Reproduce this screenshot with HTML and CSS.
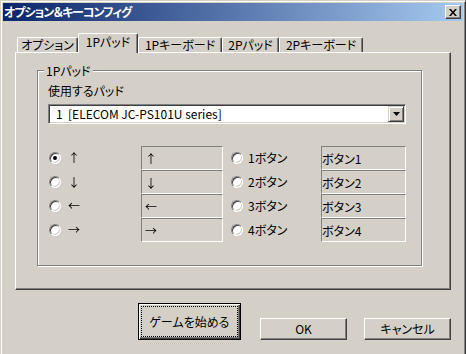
FILE: index.html
```html
<!DOCTYPE html>
<html lang="ja">
<head>
  <meta charset="UTF-8">
  <title>オプション＆キーコンフィグ</title>
  <link rel="stylesheet" href="styles.css">
</head>
<body>
  <div class="window">
    <div class="titlebar">
      <span class="title">オプション＆キーコンフィグ</span>
      <span class="close-btn">
        <svg width="8" height="7" viewBox="0 0 8 7"><path d="M0 0h2l2 2.4L6 0h2L5 3.5 8 7H6L4 4.6 2 7H0l3-3.5z" fill="#000"/></svg>
      </span>
    </div>

    <div class="main">
      <div class="tabs">
        <div class="tab tab-option">オプション</div>
        <div class="tab tab-pad1 active">1Pパッド</div>
        <div class="tab tab-key1">1Pキーボード</div>
        <div class="tab tab-pad2">2Pパッド</div>
        <div class="tab tab-key2">2Pキーボード</div>
      </div>

      <div class="panel">
        <div class="group">
          <div class="legend">1Pパッド</div>
          <div class="field-label">使用するパッド</div>
          <div class="combo">
            <span class="combo-text">1&nbsp;&nbsp;[ELECOM JC-PS101U series]</span>
            <span class="drop-btn">
              <svg width="7" height="4" viewBox="0 0 7 4"><path d="M0 0h7L3.5 4z" fill="#000"/></svg>
            </span>
          </div>

          <div class="rows">
            <div class="row">
              <span class="radio on"></span><span class="opt arrow">&#x2191;&#xFE0E;</span><span class="box box-dir arrow">&#x2191;&#xFE0E;</span>
              <span class="radio radio-btn"></span><span class="opt opt-btn">1ボタン</span><span class="box box-btn">ボタン1</span>
            </div>
            <div class="row">
              <span class="radio"></span><span class="opt arrow">&#x2193;&#xFE0E;</span><span class="box box-dir arrow">&#x2193;&#xFE0E;</span>
              <span class="radio radio-btn"></span><span class="opt opt-btn">2ボタン</span><span class="box box-btn">ボタン2</span>
            </div>
            <div class="row">
              <span class="radio"></span><span class="opt arrow">&#x2190;&#xFE0E;</span><span class="box box-dir arrow">&#x2190;&#xFE0E;</span>
              <span class="radio radio-btn"></span><span class="opt opt-btn">3ボタン</span><span class="box box-btn">ボタン3</span>
            </div>
            <div class="row">
              <span class="radio"></span><span class="opt arrow">&#x2192;&#xFE0E;</span><span class="box box-dir arrow">&#x2192;&#xFE0E;</span>
              <span class="radio radio-btn"></span><span class="opt opt-btn">4ボタン</span><span class="box box-btn">ボタン4</span>
            </div>
          </div>
        </div>
      </div>

      <div class="footer">
        <div class="btn btn-default"><span class="focus">ゲームを始める</span></div>
        <div class="btn btn-ok">OK</div>
        <div class="btn btn-cancel">キャンセル</div>
      </div>
    </div>
  </div>
</body>
</html>
```

FILE: styles.css
```css
body {
  margin: 0;
  overflow: hidden;
  background: #d4d0c8;
  font-family: "Noto Sans CJK JP", sans-serif;
  font-size: 12px;
  font-feature-settings: "palt";
  color: #000;
}
.window {
  box-sizing: border-box;
  width: 466px;
  height: 358px;
  padding: 2px;
  background: #d4d0c8;
  border: 1px solid;
  border-color: #d4d0c8 #404040 #404040 #d4d0c8;
  box-shadow: inset 1px 1px #fff, inset -1px -1px #808080;
}
.titlebar {
  height: 18px;
  display: flex;
  align-items: center;
  justify-content: space-between;
  padding: 0 2px 0 1px;
  background: linear-gradient(to right, #0a246a, #a6caf0);
}
.title {
  color: #fff;
  font-weight: bold;
  line-height: 14px;
  letter-spacing: -1px;
}
.close-btn {
  box-sizing: border-box;
  width: 16px;
  height: 14px;
  display: flex;
  align-items: center;
  justify-content: center;
  background: #d4d0c8;
  border: 1px solid;
  border-color: #fff #404040 #404040 #fff;
  box-shadow: inset -1px -1px #808080;
}
.main {
  padding: 12px 12px 0 12px;
}
.tabs {
  height: 19px;
  display: flex;
  align-items: flex-end;
  padding-left: 2px;
}
.tab {
  box-sizing: border-box;
  height: 15px;
  border: 1px solid;
  border-bottom: none;
  border-color: #fff #404040 #fff #fff;
  border-radius: 2px 2px 0 0;
  box-shadow: inset -1px 0 #808080;
  text-align: center;
  line-height: 13px;
  background: #d4d0c8;
}
.tab.active {
  height: 20px;
  margin-bottom: -1px;
  position: relative;
  z-index: 1;
  line-height: 15px;
}
.tab-option { width: 61px; }
.tab-pad1 { width: 60px; }
.tab-key1 { width: 84px; }
.tab-pad2 { width: 57px; }
.tab-key2 { width: 84px; }
.panel {
  box-sizing: border-box;
  height: 238px;
  border: 1px solid;
  border-color: #fff #404040 #404040 #fff;
  box-shadow: inset -1px -1px #808080;
  padding: 17px 0 0 21px;
}
.group {
  box-sizing: border-box;
  width: 385px;
  height: 196px;
  border: 1px solid #808080;
  box-shadow: 1px 1px #fff, inset 1px 1px #fff;
  padding-left: 10px;
}
.legend {
  width: fit-content;
  margin: -7px 0 0 -4px;
  padding: 0 2px;
  background: #d4d0c8;
  line-height: 13px;
}
.field-label {
  margin-top: 7px;
  line-height: 14px;
}
.combo {
  box-sizing: border-box;
  width: 358px;
  height: 20px;
  margin-top: 6px;
  display: flex;
  align-items: center;
  justify-content: space-between;
  padding: 0 1px 0 7px;
  background: #fff;
  border: 1px solid;
  border-color: #808080 #fff #fff #808080;
  box-shadow: inset 1px 1px #404040, inset -1px -1px #d4d0c8;
}
.combo-text {
  line-height: 14px;
}
.drop-btn {
  box-sizing: border-box;
  width: 16px;
  height: 16px;
  display: flex;
  align-items: center;
  justify-content: center;
  background: #d4d0c8;
  border: 1px solid;
  border-color: #d4d0c8 #404040 #404040 #d4d0c8;
  box-shadow: inset 1px 1px #fff, inset -1px -1px #808080;
}
.rows {
  margin-top: 22px;
}
.row {
  height: 24px;
  display: flex;
  align-items: center;
}
.radio {
  box-sizing: border-box;
  width: 12px;
  height: 12px;
  margin-left: 1px;
  display: flex;
  align-items: center;
  justify-content: center;
  border-radius: 50%;
  background: #fff;
  border: 1px solid;
  border-color: #808080 #fff #fff #808080;
  box-shadow: inset 1px 1px #404040, inset -1px -1px #d4d0c8;
}
.radio.on::after {
  content: "";
  width: 4px;
  height: 4px;
  border-radius: 50%;
  background: #000;
}
.radio-btn {
  margin-left: 8px;
}
.opt {
  width: 73px;
  margin-left: 7px;
  line-height: 14px;
}
.opt-btn {
  margin-left: 5px;
}
.arrow {
  font-variant-emoji: text;
  color: #000;
  will-change: transform;
}
.box {
  box-sizing: border-box;
  height: 24px;
  display: flex;
  align-items: center;
  border: 1px solid;
  border-color: #808080 #fff #fff #808080;
  line-height: 14px;
  padding-top: 2px;
}
.box-dir {
  width: 82px;
  padding-left: 3px;
}
.box-btn {
  width: 85px;
  padding-left: 0;
}
.footer {
  display: flex;
  align-items: flex-end;
  padding: 13px 0 0 123px;
}
.btn {
  box-sizing: border-box;
  width: 88px;
  height: 22px;
  display: flex;
  align-items: center;
  justify-content: center;
  border: 1px solid;
  border-color: #fff #404040 #404040 #fff;
  box-shadow: inset -1px -1px #808080;
  line-height: 14px;
}
.btn-default {
  width: 103px;
  height: 37px;
  padding: 2px;
  border: 1px solid #000;
  box-shadow: inset 1px 1px #fff, inset -1px -1px #404040, inset -2px -2px #808080;
}
.focus {
  flex: 1;
  align-self: stretch;
  display: flex;
  align-items: center;
  justify-content: center;
  border: 1px dotted #000;
}
.btn-ok {
  margin-left: 19px;
}
.btn-cancel {
  width: 87px;
  margin-left: 17px;
}
```
